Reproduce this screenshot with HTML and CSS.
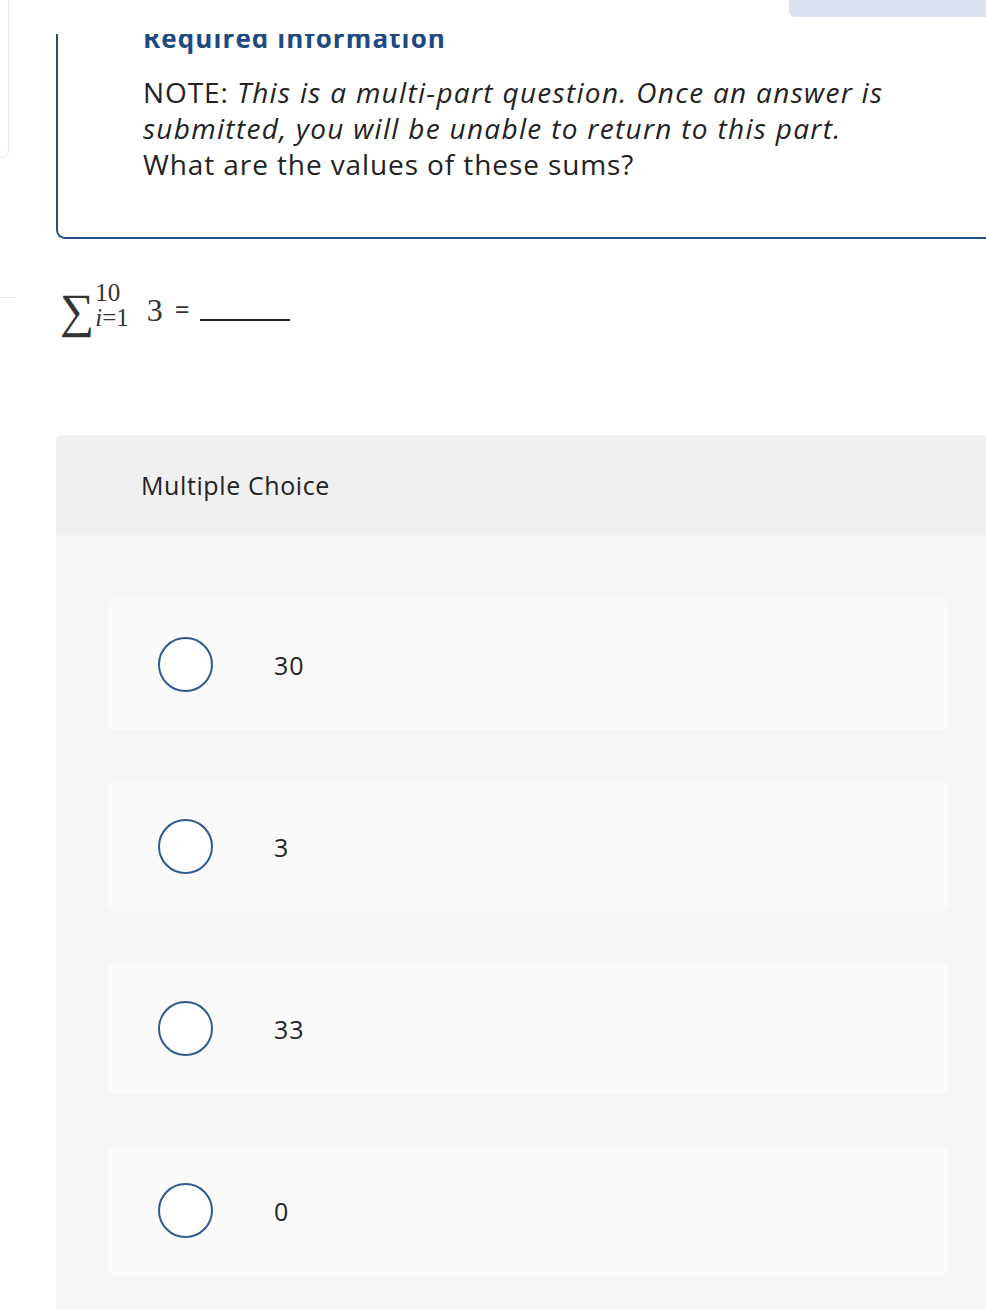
FILE: index.html
```html
<!DOCTYPE html>
<html lang="en">
<head>
<meta charset="utf-8">
<title>Multiple Choice</title>
<link rel="stylesheet" href="styles.css">
</head>
<body>
<div class="page">
  <div class="top-strip">
    <div class="side-card"></div>
    <div class="top-button"></div>
  </div>

  <div class="req-clip">
    <div class="req-box">
      <h2 class="req-title">Required information</h2>
      <p class="req-text">NOTE: <em>This is a multi-part question. Once an answer is<br>submitted, you will be unable to return to this part.</em><br>What are the values of these sums?</p>
    </div>
  </div>

  <div class="sum-row">
    <div class="stub"></div>
    <div class="formula">
      <span class="sigma">&sum;</span>
      <span class="limits"><span class="sup">10</span><span class="sub"><i>i</i>=1</span></span>
      <span class="term">3</span>
      <span class="eq">=</span>
      <span class="blank"></span>
    </div>
  </div>

  <section class="mc">
    <div class="mc-head">Multiple Choice</div>
    <div class="mc-body">
      <label class="opt"><span class="radio"></span><span class="opt-text">30</span></label>
      <label class="opt"><span class="radio"></span><span class="opt-text">3</span></label>
      <label class="opt"><span class="radio"></span><span class="opt-text">33</span></label>
      <label class="opt"><span class="radio"></span><span class="opt-text">0</span></label>
    </div>
  </section>
</div>
</body>
</html>
```

FILE: styles.css
```css
html, body {
  margin: 0;
  padding: 0;
  background: #ffffff;
}
body {
  width: 986px;
  height: 1310px;
  overflow: hidden;
  font-family: "Open Sans", "Lato", sans-serif;
  color: #222222;
}
.page {
  position: relative;
  width: 986px;
}
.top-strip {
  position: relative;
  height: 34px;
}
.side-card {
  position: absolute;
  left: -20px;
  top: -10px;
  width: 27px;
  height: 166px;
  border: 1px solid #e6e6e6;
  border-radius: 8px;
  background: #ffffff;
}
.top-button {
  position: absolute;
  right: 0;
  top: 0;
  width: 197px;
  height: 17px;
  background: #d9e2ee;
  border-bottom-left-radius: 6px;
}
.req-clip {
  margin-left: 56px;
  height: 205px;
  overflow: hidden;
}
.req-box {
  margin-top: -12px;
  height: 217px;
  box-sizing: border-box;
  border-left: 2px solid #244d82;
  border-bottom: 2px solid #244d82;
  border-bottom-left-radius: 9px;
  padding-left: 85px;
}
.req-title {
  margin: 0;
  font-size: 26px;
  line-height: 32px;
  font-weight: 700;
  letter-spacing: 1.1px;
  color: #1f4a80;
  white-space: nowrap;
}
.req-text {
  margin: 20px 0 0;
  font-size: 28px;
  line-height: 36px;
  letter-spacing: 0.9px;
  color: #222222;
  white-space: nowrap;
}
.req-text em {
  font-style: italic;
  letter-spacing: 1.3px;
}
.sum-row {
  position: relative;
  margin-top: 38px;
  height: 62px;
}
.stub {
  position: absolute;
  left: 0;
  top: 20px;
  width: 15px;
  height: 1px;
  background: #e6e6e6;
}
.formula {
  display: flex;
  align-items: center;
  margin-left: 60px;
  font-family: "Liberation Serif", "Times New Roman", serif;
  color: #333333;
  height: 62px;
}
.sigma {
  font-size: 48px;
  line-height: 46px;
  margin-top: 6px;
}
.limits {
  display: flex;
  flex-direction: column;
  margin-left: 1px;
  font-size: 25px;
  line-height: 25px;
}
.limits .sup {
  margin-top: -6px;
}
.limits i {
  font-style: italic;
}
.term {
  font-size: 32px;
  margin-left: 18px;
  margin-top: 4px;
}
.eq {
  font-family: "Open Sans", sans-serif;
  font-size: 26px;
  margin-left: 12px;
  margin-top: 2px;
}
.blank {
  width: 90px;
  height: 2px;
  background: #222222;
  margin-left: 10px;
  margin-top: 24px;
}
.mc {
  margin: 96px 0 0 56px;
  background: #f5f5f5;
  border-top-left-radius: 6px;
  height: 900px;
}
.mc-head {
  height: 100px;
  background: #f0f0f0;
  border-top-left-radius: 6px;
  display: flex;
  align-items: center;
  padding-left: 85px;
  font-size: 25px;
  letter-spacing: 0.6px;
  color: #222222;
}
.mc-body {
  padding: 64px 38px 0 52px;
  display: flex;
  flex-direction: column;
  gap: 51px;
}
.opt {
  display: flex;
  align-items: center;
  height: 131px;
  background: #fafafa;
  border-radius: 7px;
  padding-left: 50px;
}
.radio {
  width: 55px;
  height: 55px;
  box-sizing: border-box;
  border: 2px solid #2d5a8f;
  border-radius: 50%;
  background: #ffffff;
  flex: none;
}
.opt-text {
  margin-left: 61px;
  font-size: 25px;
  letter-spacing: 1px;
  color: #222222;
}
```
